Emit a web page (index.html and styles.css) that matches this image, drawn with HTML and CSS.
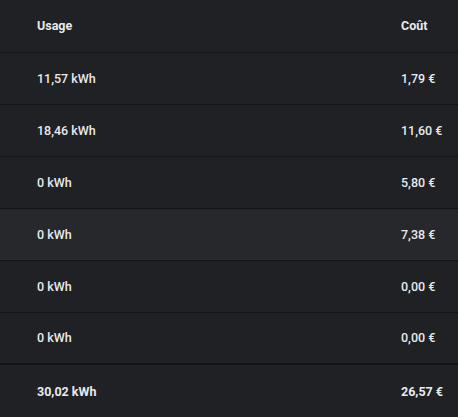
FILE: index.html
```html
<!DOCTYPE html>
<html lang="fr">
<head>
    <meta charset="UTF-8">
    <meta name="viewport" content="width=device-width, initial-scale=1.0">
    <title>Usage</title>
    <link rel="stylesheet" href="styles.css">
</head>
<body>
    <table class="usage-table">
        <thead>
            <tr>
                <th class="col-usage">Usage</th>
                <th class="col-cost">Coût</th>
            </tr>
        </thead>
        <tbody>
            <tr><td>11,57 kWh</td><td>1,79 €</td></tr>
            <tr><td>18,46 kWh</td><td>11,60 €</td></tr>
            <tr><td>0 kWh</td><td>5,80 €</td></tr>
            <tr class="hovered"><td>0 kWh</td><td>7,38 €</td></tr>
            <tr><td>0 kWh</td><td>0,00 €</td></tr>
            <tr><td>0 kWh</td><td>0,00 €</td></tr>
        </tbody>
        <tfoot>
            <tr><td>30,02 kWh</td><td>26,57 €</td></tr>
        </tfoot>
    </table>
</body>
</html>
```

FILE: styles.css
```css
/* Reset and base styles */
* {
    margin: 0;
    padding: 0;
    box-sizing: border-box;
    font-family: Roboto, 'Liberation Sans', sans-serif;
}

body {
    background-color: #202124;
    color: #e8eaed;
}

.usage-table {
    width: 100%;
    border-collapse: collapse;
    font-size: 12.5px;
    font-weight: 500;
}

.usage-table th,
.usage-table td {
    height: 52px;
    text-align: left;
    vertical-align: middle;
    padding: 0 0 0 37px;
}

.usage-table th {
    font-weight: 700;
    border-bottom: 1px solid #131416;
}

.usage-table tbody td {
    border-bottom: 1px solid #131416;
}

.usage-table .col-cost {
    width: 57px;
}

.usage-table tr td:last-child,
.usage-table tr th:last-child {
    padding-left: 0;
}

.usage-table tbody tr.hovered {
    background-color: #27282c;
}

.usage-table tfoot td {
    font-weight: 700;
    border-top: 2px solid #131416;
    height: 53px;
}
```
